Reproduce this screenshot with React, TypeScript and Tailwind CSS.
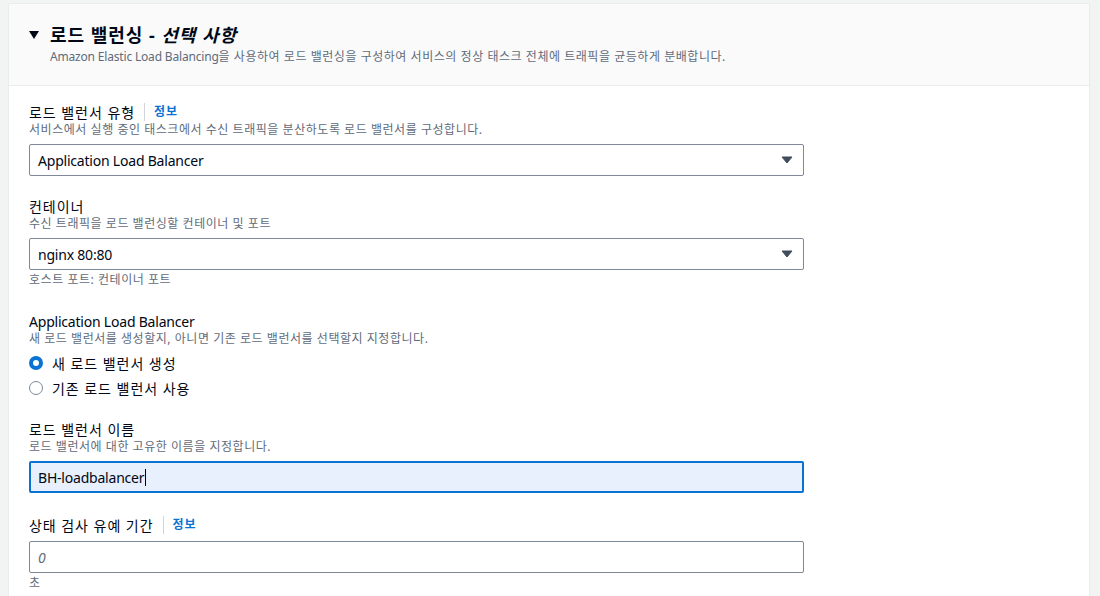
const font = { fontFamily: '"Noto Sans", "Noto Sans CJK KR", sans-serif' };

// Latin runs are narrower than the Korean ones in the original
function L({ children }: { children: React.ReactNode }) {
  return <span className="tracking-[-0.015em]">{children}</span>;
}

function Hint({ children, className = "" }: { children: React.ReactNode; className?: string }) {
  return <p className={`text-[12px] leading-[16px] tracking-[0.045em] text-[#5f6b7a] ${className}`}>{children}</p>;
}

function Info() {
  return (
    <>
      <span className="mx-[9px] h-[18px] w-px bg-[#d1d5db]" />
      <span className="text-[12px] font-bold text-[#0972d3]">정보</span>
    </>
  );
}

function Caret() {
  return (
    <svg width="12" height="8" viewBox="0 0 12 8" className="text-[#414d5c]">
      <path d="M1 1h10L6 7z" fill="currentColor" stroke="currentColor" strokeLinejoin="round" />
    </svg>
  );
}

function Select({ value }: { value: string }) {
  return (
    <div className="flex h-[32px] w-[775px] items-center justify-between rounded-[2px] border border-[#7d8998] bg-white pl-[8px] pr-[10px] text-[14px] text-[#000716]">
      <L>{value}</L>
      <Caret />
    </div>
  );
}

export default function App() {
  return (
    <div className="min-h-[596px] bg-[#f2f3f3] pl-[8px] pr-[10px] pt-[3px] tracking-[0.06em]" style={font}>
      <div className="border border-[#eaeded] bg-white">
        {/* Header */}
        <div className="h-[82px] border-b border-[#eaeded] bg-[#fafafa] pl-[20px] pt-[18px]">
          <div className="flex items-center">
            <svg width="10" height="8" viewBox="0 0 10 8" className="mr-[11px] text-[#000716]">
              <path d="M0 0h10L5 8z" fill="currentColor" />
            </svg>
            <h2 className="text-[18px] font-bold leading-[26px] text-[#000716]">
              로드 밸런싱 - <i>선택 사항</i>
            </h2>
          </div>
          <Hint className="ml-[21px] mt-[1px]">
            <L>Amazon Elastic Load Balancing</L>을 사용하여 로드 밸런싱을 구성하여 서비스의 정상 태스크 전체에 트래픽을 균등하게 분배합니다.
          </Hint>
        </div>

        {/* Form */}
        <div className="pl-[20px] pt-[16px] pb-[8px]">
          <div className="flex h-[20px] items-center text-[14px] text-[#000716]">
            로드 밸런서 유형
            <Info />
          </div>
          <Hint className="mb-[6px]">서비스에서 실행 중인 태스크에서 수신 트래픽을 분산하도록 로드 밸런서를 구성합니다.</Hint>
          <Select value="Application Load Balancer" />

          <div className="mt-[20px] flex h-[20px] items-center text-[14px] text-[#000716]">컨테이너</div>
          <Hint className="mb-[6px]">수신 트래픽을 로드 밸런싱할 컨테이너 및 포트</Hint>
          <Select value="nginx 80:80" />
          <Hint className="mt-[2px]">호스트 포트: 컨테이너 포트</Hint>

          <div className="mt-[23px] flex h-[20px] items-center text-[14px] text-[#000716]">
            <L>Application Load Balancer</L>
          </div>
          <Hint>새 로드 밸런서를 생성할지, 아니면 기존 로드 밸런서를 선택할지 지정합니다.</Hint>
          <div className="mt-[4px] flex h-[24px] items-center text-[14px] text-[#000716]">
            <span className="mr-[9px] h-[14px] w-[14px] rounded-full border-[4px] border-[#0972d3] bg-white" />
            새 로드 밸런서 생성
          </div>
          <div className="mt-[1px] flex h-[24px] items-center text-[14px] text-[#000716]">
            <span className="mr-[9px] h-[14px] w-[14px] rounded-full border border-[#7d8998] bg-white" />
            기존 로드 밸런서 사용
          </div>

          <div className="mt-[19px] flex h-[20px] items-center text-[14px] text-[#000716]">로드 밸런서 이름</div>
          <Hint className="mb-[6px]">로드 밸런서에 대한 고유한 이름을 지정합니다.</Hint>
          <div className="flex h-[32px] w-[775px] items-center rounded-[2px] border-2 border-[#0972d3] bg-[#e8f0fe] pl-[7px] text-[14px] text-[#000716]">
            <L>BH-loadbalancer</L>
            <span className="ml-px h-[17px] w-px bg-black" />
          </div>

          <div className="mt-[22px] flex h-[20px] items-center text-[14px] text-[#000716]">
            상태 검사 유예 기간
            <Info />
          </div>
          <div className="mt-[6px] flex h-[32px] w-[775px] items-center rounded-[2px] border border-[#7d8998] bg-white pl-[8px] text-[14px] italic text-[#5f6b7a]">
            0
          </div>
          <Hint className="mt-[2px]">초</Hint>
        </div>
      </div>
    </div>
  );
}
